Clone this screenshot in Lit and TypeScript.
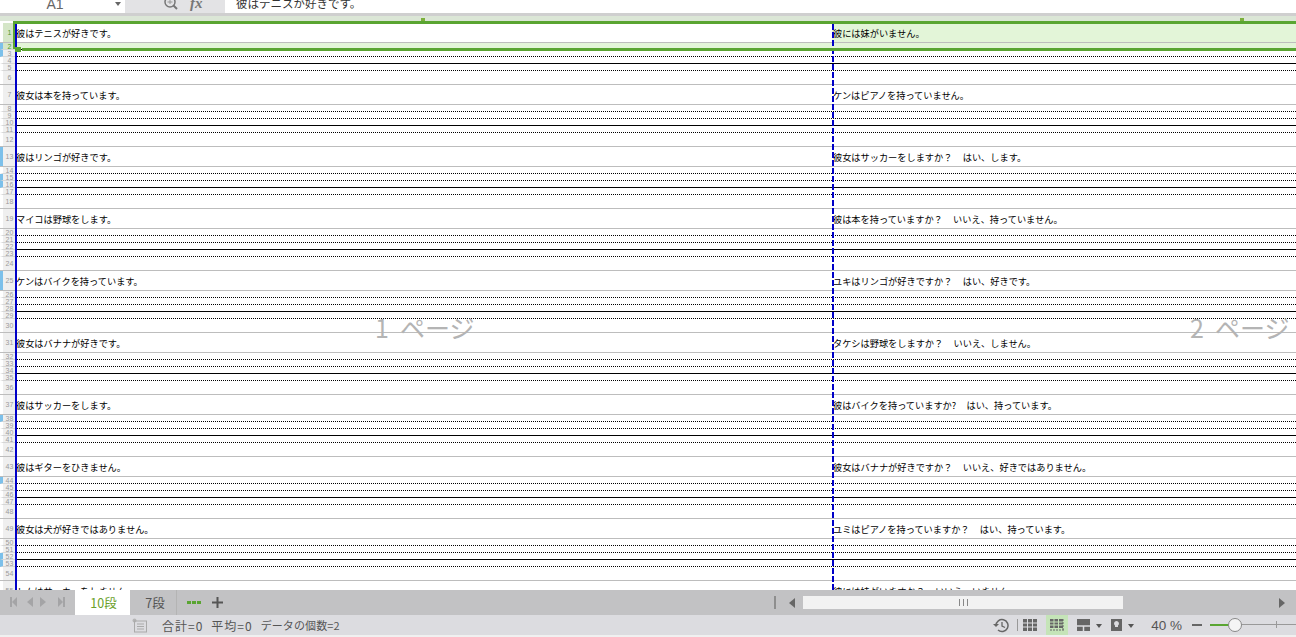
import { LitElement, html, css, svg } from "lit";
import { customElement } from "lit/decorators.js";

const GAP = "     ";
const LEFT = ["彼はテニスが好きです。","彼女は本を持っています。","彼はリンゴが好きです。","マイコは野球をします。","ケンはバイクを持っています。","彼女はバナナが好きです。","彼はサッカーをします。","彼はギターをひきません。","彼女は犬が好きではありません。","トムはサッカーをしません。"];
const RIGHT = ["彼には妹がいません。","ケンはピアノを持っていません。",`彼女はサッカーをしますか？${GAP}はい、します。`,`彼は本を持っていますか？${GAP}いいえ、持っていません。`,`ユキはリンゴが好きですか？${GAP}はい、好きです。`,`タケシは野球をしますか？${GAP}いいえ、しません。`,`彼はバイクを持っていますか?${GAP}はい、持っています。`,`彼女はバナナが好きですか？${GAP}いいえ、好きではありません。`,`ユミはピアノを持っていますか？${GAP}はい、持っています。`,`彼には妹がいますか？${GAP}いいえ、いません。`];
const KINDS = ["text","dot","dot","solid","dot","gap"];
const MARKED = new Set([2,3,13,15,16,25,38,44,52,53]);

@customElement("app-root")
export class AppRoot extends LitElement {
  static styles = css`
    :host { display:flex; flex-direction:column; width:1296px; height:637px; overflow:hidden; background:#fff; font-family:"Noto Sans CJK JP","Liberation Sans",sans-serif; color:#000; }
    .formula { height:13px; display:flex; overflow:hidden; flex:none; background:#fff; }
    .name { width:125px; height:13px; position:relative; display:flex; justify-content:center; color:#666; font:14px/8px "Liberation Sans",sans-serif; box-sizing:border-box; padding-right:15px; }
    .name i { position:absolute; right:4px; top:2px; border:3px solid transparent; border-top:4px solid #666; }
    .fbtns { width:100px; background:#e3e3e5; display:flex; gap:10px; padding-left:39px; box-sizing:border-box; align-items:flex-start; }
    .fx { font:italic bold 15px/7px "Liberation Serif",serif; color:#777; }
    .ftext { padding-left:11px; font-size:11.5px; line-height:6px; color:#333; white-space:pre; }
    .colhead { flex:none; height:8px; border-top:3px solid #cfcfcf; box-sizing:border-box; background:#dbe6d6; position:relative; }
    .tick { position:absolute; top:2px; width:4px; height:4px; background:#7cb03c; }
    .t1 { left:421px; } .t2 { left:1240px; }
    .sheet { flex:1; min-height:0; position:relative; overflow:hidden; padding-top:2px; }
    .row { display:flex; box-sizing:border-box; border-bottom:1px solid #bdbdbd; }
    .row.text { height:20px; }
    .row.dot { height:7px; border-bottom:0; }
    .row.solid { height:7px; border-bottom:0; }
    .row.gap { height:14px; }
    .head { width:15px; flex:none; box-sizing:border-box; border-left:3px solid #fff; background:#efefef; color:#9a9a9a; font:7px/1 "Liberation Sans",sans-serif; display:flex; align-items:center; justify-content:center; padding-left:1px; }
    .row.dot .head,.row.solid .head { border-bottom:1px solid #d6d6d6; }
    .head.mark { border-left-color:#7cc0ea; }
    .head.sel { background:#d5e6c8; color:#4a9a2a; }
    .cells { flex:1; display:flex; min-width:0; }
    .row.dot .cells { border-bottom:1px dotted #000; }
    .row.solid .cells { border-bottom:1px solid #000; }
    .cell { font-size:9.2px; line-height:20px; white-space:pre; padding-left:1px; box-sizing:border-box; }
    .a { width:817px; flex:none; }
    .b { flex:1; padding-left:1px; }
    .tint { background:#e3f5d8; }
    .blue { position:absolute; left:15px; top:0; bottom:0; width:2px; background:#0000c8; }
    .brk { position:absolute; left:832px; top:3px; bottom:0; width:2px; background:repeating-linear-gradient(#0000c8 0 6px,transparent 6px 8px); }
    .seltop { position:absolute; left:13px; right:0; top:0; height:3px; background:#5aa532; }
    .selleft { position:absolute; left:13px; top:0; height:28px; width:2px; background:#5aa532; }
    .selbot { position:absolute; left:22px; right:0; top:27px; height:3px; background:#5aa532; }
    .handle { position:absolute; left:15px; top:26px; width:6px; height:5px; background:#5aa532; }
    .wm { position:absolute; top:291px; font-size:25px; line-height:30px; color:#b4b4b4; white-space:pre; font-weight:400; }
    .w1 { left:375px; } .w2 { left:1190px; }
    .tabs { height:25px; flex:none; background:#c2c2c4; display:flex; align-items:center; color:#555; }
    .nav { width:75px; display:flex; align-items:center; }
    .tab { height:25px; display:flex; align-items:center; justify-content:center; font-size:12.5px; box-sizing:border-box; }
    .tab.on { width:55px; background:#fff; color:#6aa02a; padding-left:2px; }
    .tab.off { width:47px; border-right:1px solid #b4b4b4; color:#555; padding-left:4px; }
    .dots { display:flex; gap:1px; margin-left:10px; }
    .dots i { width:4px; height:3px; background:#5aa532; }
    .plus { margin-left:11px; display:flex; }
    .spacer { flex:1; }
    .vsep { width:2px; height:13px; background:#8e8e8e; }
    .larr { margin-left:12px; }
    .rarr { margin-left:155px; margin-right:10px; }
    .track { width:320px; height:13px; background:#f2f2f2; margin:0 0 0 7px; display:flex; align-items:center; justify-content:center; gap:3px; }
    .track i { width:1px; height:7px; background:#888; }
    .status { flex:none; height:22px; background:#dcdce0; display:flex; align-items:center; color:#555; font-size:12px; white-space:pre; box-sizing:border-box; border-bottom:2px solid #f0f0f0; }
    .stat-ico { margin-left:132px; }
    .sum { margin-left:15px; display:flex; gap:8px; }
    .sum .w { letter-spacing:1px; }
    .sum .n { font-size:11px; letter-spacing:.1px; }
    .sbtn { width:22px; height:20px; display:flex; align-items:center; justify-content:center; margin-left:9px; }
    .sbtn.on { background:#c5e4b8; }
    .thin { width:1px; height:12px; background:#999; margin:0 4px 0 8px; }
    .grid { margin-left:1px; }
    .pg { margin-left:9px; }
    .bulb { margin-left:9px; }
    .caret { border:3px solid transparent; border-top:4px solid #555; margin:4px 0 0 6px; }
    .pct { font:13.5px "Liberation Sans",sans-serif; color:#555; margin-left:17px; }
    .slider { width:86px; height:14px; position:relative; margin-left:8px; }
    .slider .g { position:absolute; left:0; top:6px; width:20px; height:2px; background:#5aa532; }
    .slider .l { position:absolute; left:20px; right:0; top:6px; height:1px; background:#999; }
    .slider .k { position:absolute; left:66px; top:3px; width:1px; height:7px; background:#999; }
    .slider .o { position:absolute; left:18px; top:0; width:12px; height:12px; border-radius:50%; background:#f5f5f5; border:1px solid #888; }
    .minus { width:10px; height:2px; background:#666; margin-left:10px; }
  `;

  private rows() {
    const out = [];
    for (let g = 0; g < 10; g++) {
      for (let k = 0; k < 6; k++) {
        const n = g * 6 + k + 1;
        const kind = KINDS[k];
        const first = n === 1;
        const second = n === 2;
        out.push(html`<div class="row ${kind}">
          <div class="head ${first || second ? "sel" : ""} ${MARKED.has(n) ? "mark" : ""}">${n}</div>
          <div class="cells ${second ? "tint" : ""}">
            <div class="cell a">${k === 0 ? LEFT[g] : ""}</div>
            <div class="cell b ${first ? "tint" : ""}">${k === 0 ? RIGHT[g] : ""}</div>
          </div>
        </div>`);
      }
    }
    return out;
  }

  private tri(points: string, bar?: number) {
    return svg`<polygon points=${points} fill="#a4a4a6"/>${bar !== undefined ? svg`<rect x=${bar} y="597" width="2" height="10" fill="#a4a4a6"/>` : ""}`;
  }

  render() {
    return html`
      <div class="formula">
        <div class="name">A1<i></i></div>
        <div class="fbtns">
          <svg width="16" height="13" viewBox="0 0 16 13"><circle cx="6" cy="2" r="5" fill="none" stroke="#777" stroke-width="1.5"/><path d="M9.5 5.5 13 9" stroke="#777" stroke-width="2"/><path d="M3.5 2h5M6 0v4" stroke="#999"/></svg>
          <span class="fx">fx</span>
        </div>
        <div class="ftext">彼はテニスが好きです。</div>
      </div>
      <div class="colhead"><div class="tick t1"></div><div class="tick t2"></div></div>
      <div class="sheet">
        ${this.rows()}
        <div class="wm w1">1  ページ</div>
        <div class="wm w2">2  ページ</div>
        <div class="blue"></div>
        <div class="brk"></div>
        <div class="seltop"></div>
        <div class="selleft"></div>
        <div class="selbot"></div>
        <div class="handle"></div>
      </div>
      <div class="tabs">
        <div class="nav">
          <svg width="75" height="25" viewBox="0 590 75 25">
            ${this.tri("17,597 12,602 17,607", 10)}
            ${this.tri("33,597 27,602 33,607")}
            ${this.tri("40,597 46,602 40,607")}
            ${this.tri("58,597 63,602 58,607", 63)}
          </svg>
        </div>
        <div class="tab on">10段</div>
        <div class="tab off">7段</div>
        <div class="dots"><i></i><i></i><i></i></div>
        <div class="plus"><svg width="11" height="11" viewBox="0 0 11 11"><path d="M5.5 0v11M0 5.5h11" stroke="#555" stroke-width="2"/></svg></div>
        <div class="spacer"></div>
        <div class="vsep"></div>
        <svg class="larr" width="8" height="12" viewBox="0 0 8 12"><polygon points="7,1 1,6 7,11" fill="#666"/></svg>
        <div class="track"><i></i><i></i><i></i></div>
        <svg class="rarr" width="8" height="12" viewBox="0 0 8 12"><polygon points="1,1 7,6 1,11" fill="#666"/></svg>
      </div>
      <div class="status">
        <svg class="stat-ico" width="15" height="15" viewBox="0 0 15 15"><circle cx="2.5" cy="2.5" r="2" fill="#b5b5b5"/><rect x="2.5" y="3" width="12" height="11" fill="none" stroke="#aaa"/><path d="M5 6h7M5 8.5h7M5 11h7" stroke="#aaa"/></svg>
        <div class="sum"><span class="w">合計=0</span><span class="w">平均=0</span><span class="n">データの個数=2</span></div>
        <div class="spacer"></div>
        <svg width="16" height="15" viewBox="0 0 16 15"><path d="M3 7.500a6 6 0 1 1 2 4.500" fill="none" stroke="#666" stroke-width="1.500"/><path d="M0 6l3 3 3-3z" fill="#666"/><path d="M9 4v4l3 1.500" fill="none" stroke="#666" stroke-width="1.300"/></svg>
        <div class="thin"></div>
        <svg class="grid" width="14" height="12" viewBox="0 0 14 12"><path d="M0 0h14v12H0z" fill="#666"/><path d="M0 4h14M0 8h14M4.500 0v12M9.500 0v12" stroke="#dcdce0"/></svg>
        <div class="sbtn on"><svg width="14" height="13" viewBox="0 0 14 13"><path d="M0 0h13v9H0z" fill="#666"/><path d="M0 3h13M0 6h13M4 0v9M8.500 0v9" stroke="#c5e4b8"/><path d="M0 11h14M13 0v11" stroke="#666" stroke-dasharray="2 1"/></svg></div>
        <svg class="pg" width="13" height="12" viewBox="0 0 13 12"><path d="M0 0h13v12H0z" fill="#666"/><path d="M0 7h13M6.500 7v5" stroke="#dcdce0" stroke-width="1.500"/></svg>
        <span class="caret"></span>
        <svg class="bulb" width="11" height="12" viewBox="0 0 11 12"><path d="M0 0h11v12H0z" fill="#666"/><path d="M5.500 2a2.500 2.500 0 0 1 1.500 4.500V8H4V6.500A2.500 2.500 0 0 1 5.500 2z" fill="#dcdce0"/></svg>
        <span class="caret"></span>
        <span class="pct">40 %</span>
        <div class="minus"></div>
        <div class="slider"><div class="l"></div><div class="k"></div><div class="g"></div><div class="o"></div></div>
      </div>
    `;
  }
}
